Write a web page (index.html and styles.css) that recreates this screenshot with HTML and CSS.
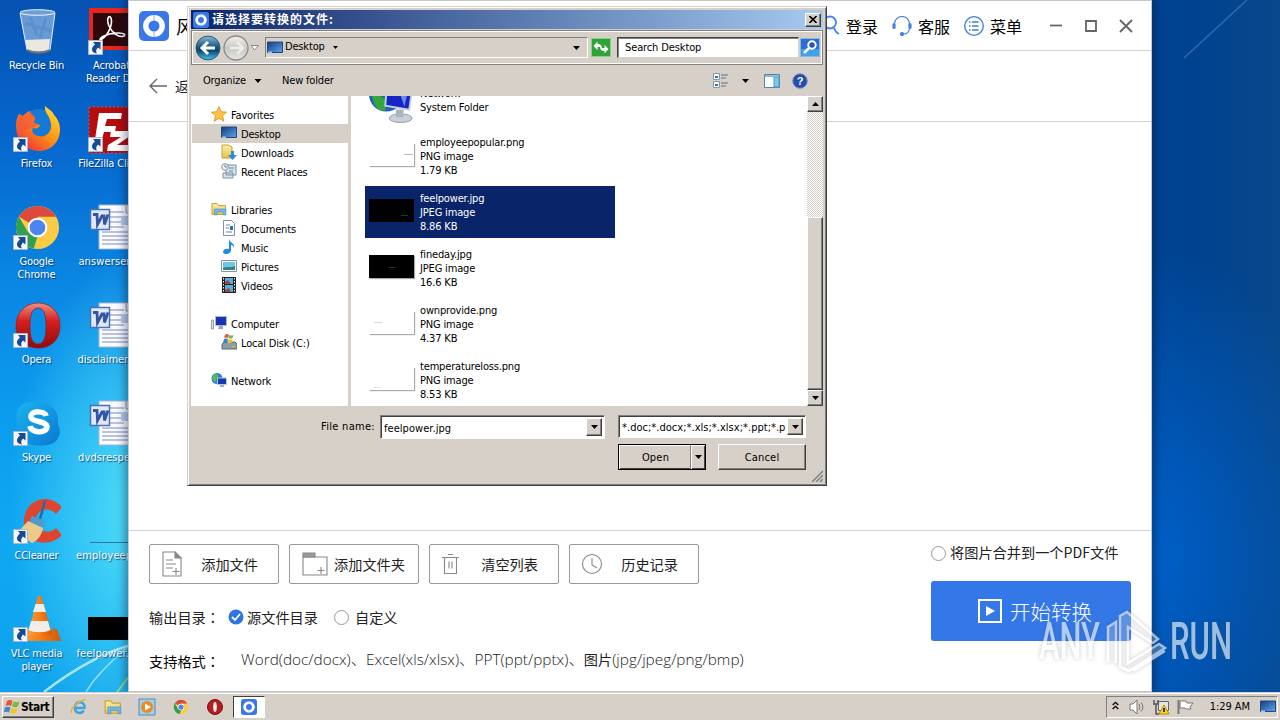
FILE: index.html
```html
<!DOCTYPE html>
<html lang="zh-CN">
<head>
<meta charset="utf-8">
<title>Desktop</title>
<link rel="stylesheet" href="styles.css">
</head>
<body>
<svg class="defs" width="0" height="0">
  <defs>
    <linearGradient id="gRed" x1="0" y1="0" x2="0" y2="1"><stop offset="0" stop-color="#ef8f84"/><stop offset=".4" stop-color="#d51f1f"/><stop offset="1" stop-color="#8f0a0c"/></linearGradient>
    <linearGradient id="gScreen" x1="0" y1="0" x2="1" y2="1"><stop offset="0" stop-color="#14397e"/><stop offset="1" stop-color="#5aa7ee"/></linearGradient>
    <linearGradient id="gFox" x1="1" y1="0" x2="0.2" y2="1"><stop offset="0" stop-color="#ffe83a"/><stop offset=".5" stop-color="#ff9a12"/><stop offset="1" stop-color="#ee2c3c"/></linearGradient>
    <linearGradient id="gSkype" x1="0" y1="0" x2="1" y2="1"><stop offset="0" stop-color="#19b4ee"/><stop offset="1" stop-color="#0a78d2"/></linearGradient>
    <linearGradient id="gBack" x1="0" y1="0" x2="0" y2="1"><stop offset="0" stop-color="#8fb9cf"/><stop offset=".45" stop-color="#175984"/><stop offset=".6" stop-color="#0b4470"/><stop offset="1" stop-color="#46c3ea"/></linearGradient>
    <linearGradient id="gFwd" x1="0" y1="0" x2="0" y2="1"><stop offset="0" stop-color="#f4f3f1"/><stop offset=".5" stop-color="#c9c7c3"/><stop offset="1" stop-color="#e8e6e3"/></linearGradient>
    <linearGradient id="gFolder" x1="0" y1="0" x2="0" y2="1"><stop offset="0" stop-color="#fdf0a8"/><stop offset="1" stop-color="#e9bf4e"/></linearGradient>
    <linearGradient id="gCone" x1="0" y1="0" x2="1" y2="0"><stop offset="0" stop-color="#f9a341"/><stop offset=".5" stop-color="#f67d16"/><stop offset="1" stop-color="#cf5a08"/></linearGradient>
    <symbol id="shortcut" viewBox="0 0 15 15"><path d="M.5.500h14v14H.5z" fill="#f4f7fb" stroke="#a9b6c6"/><path d="M5 2h7.500v7.500L10 7.500C8 9.500 7.700 11 8.800 13.500 3 12.500 2.500 8 7 4.500z" fill="#174a94"/></symbol>
    <symbol id="brand" viewBox="0 0 30 30"><rect width="30" height="30" rx="5" fill="#3b78e7"/><circle cx="15" cy="15" r="8.200" fill="none" stroke="#fff" stroke-width="5.400"/><path d="M15 3.500v6M15 20.500v6" stroke="#3b78e7" stroke-width=".6"/></symbol>
    <symbol id="monitor" viewBox="0 0 16 14"><path d="M.5 1h15v10.500H.5z" fill="url(#gScreen)" stroke="#24477f"/><path d="M1 10.500h4v2H1z" fill="#9fc4ea"/></symbol>
    <symbol id="word" viewBox="0 0 48 48"><path d="M11 1h37v44H11z" fill="#fdfdff" stroke="#a9b4cf"/><path d="M22 8h14M22 13h14M22 18h14M22 23h14M14 28h32M14 32h32M14 36h32M14 40h32" stroke="#7987cc" stroke-width="1.100"/><path d="M38 1v8h8" fill="#e3e8f2" stroke="#97a3bb"/><path d="M33 12h12v9H33z" fill="#b8cdea"/><path d="M2.500 5.500h19v20h-19z" fill="#dfe9f7" stroke="#4a70b6" stroke-width="1.500"/><path d="M5 10.500h4l.5 10L14 12h2l.5 8.500L20 10.500" fill="none" stroke="#3455a4" stroke-width="2.800"/></symbol>
    <symbol id="chrome" viewBox="0 0 48 48"><circle cx="24" cy="24" r="22" fill="#fbcb43"/><path d="M24 24 5 12.900A22 22 0 0 1 43 13H24z" fill="#dc4a3d"/><path d="M5 12.900 14.500 29 24 33l-3.800 12.700A22 22 0 0 1 5 12.900z" fill="#2ea050"/><circle cx="24" cy="24" r="10" fill="#fff"/><circle cx="24" cy="24" r="8" fill="#4b86ee"/></symbol>
    <symbol id="opera" viewBox="0 0 48 48"><path fill-rule="evenodd" d="M24 1c13 0 22 9 22 23S37 46 24 46 2 37 2 24 11 1 24 1zm0 5c-6 0-8 7-8 18s2 18 8 18 8-7 8-18-2-18-8-18z" fill="url(#gRed)" stroke="#9d1719" stroke-width=".7"/></symbol>
    <symbol id="folder" viewBox="0 0 16 16"><path d="M1 2.500h5l1.500 2H14.500v9H1z" fill="url(#gFolder)" stroke="#c9a13a"/><path d="M3.500 8h11.500v6h-2.500v-3H6v3H3.500z" fill="#6fb9e8" stroke="#4b91c9" stroke-width=".6"/></symbol>
    <symbol id="globe" viewBox="0 0 16 16"><circle cx="6" cy="6.500" r="5.500" fill="#2a7fd0"/><path d="M2 3c3-2 5-1 5 1s-3 3-2 5-3 0-4-2z" fill="#4fbd5a"/><path d="M6.500 6h9v6.500h-9z" fill="#1737b5" stroke="#b9c8da"/><path d="M9 13h4v2H9z" fill="#9db0c4"/></symbol>
    <symbol id="tri" viewBox="0 0 7 4"><path d="M0 0h7L3.500 4z" fill="#000"/></symbol>
  </defs>
</svg>

<main class="desktop">
  <svg class="streaks" viewBox="0 0 1280 692">
    <path d="M44 692C75 668 105 652 134 644" stroke="#d8f7ff" stroke-width="2.500" opacity=".75" fill="none"/>
    <path d="M86 692C98 672 114 660 134 640" stroke="#bdeffc" stroke-width="1.500" opacity=".7" fill="none"/>
    <path d="M117 692l14-18" stroke="#a5e86b" stroke-width="2" opacity=".8"/>
    <path d="M1184 58 1247 0" stroke="#4e8bc4" stroke-width="1.500" opacity=".55"/>
  </svg>

  <section class="icons">
    <div class="shortcut-tile"><svg viewBox="0 0 48 48"><path d="M7 4h35l-5 38c-4 4-18 4-23 0z" fill="#b9d6ef" opacity=".55"/><path d="M12 32l25-1-1 10c-4 3-17 3-22 0z" fill="#ece8e0"/><path d="M17 9l7 18M33 10l-6 20M12 15l26 8" stroke="#4f85c8" stroke-width="3" opacity=".5"/><ellipse cx="24.500" cy="4.500" rx="17.500" ry="2.800" fill="#6f9fd3" stroke="#eef5fc"/><path d="M14 42c5 3.500 18 3.500 23 0" stroke="#766f68" stroke-width="2" fill="none"/><path d="M7 5l7 37M42 5l-5 37" stroke="#e1eefa"/></svg><span>Recycle Bin</span></div>
    <div class="shortcut-tile"><svg viewBox="0 0 48 48"><path d="M1 0h47v42H1z" fill="#e7261d"/><path d="M5 5h43v33H5z" fill="#2d0709"/><path d="M14 31c6-4 11-14 9-21-2-4-5 1-2 8 3 7 10 12 15 10 4-3-10-5-20 0-6 3-4 5-2 3z" fill="none" stroke="#fff" stroke-width="1.600"/><use href="#shortcut" x="0" y="32" width="15" height="15"/></svg><span>Acrobat<br>Reader DC</span></div>

    <div class="shortcut-tile"><svg viewBox="0 0 48 48"><circle cx="26" cy="19" r="16" fill="#1679d4"/><path d="M32 0c-1 7 5 9 6 18 1 9-6 14-13 12-5-1-7-5-5-8 3 1 6 0 7-3l-6-2 1-6c-4-1-5-3-5-6-3 1-5 3-7 5L6 8C2 14 3 23 4 28c3 11 12 17 22 17 12 0 21-9 21-22 0-6-3-11-6-14-1-4-5-5-9-9z" fill="url(#gFox)"/><path d="M6 8c-3 9-2 16 0 22 3-5 7-7 14-8l7-3-6-2 1-6-5-6-7 5z" fill="#f1583a" opacity=".75"/><use href="#shortcut" x="0" y="31" width="15" height="15"/></svg><span>Firefox</span></div>
    <div class="shortcut-tile"><svg viewBox="0 0 48 48"><path d="M1 1h47v46H1z" fill="#b60c0d" stroke="#d54848" stroke-dasharray="2 2"/><path d="M11 7h23l-1 6H19l-2 7h11l-1 6H16l-4 14H6zM23 25h20l-1 5-13 9h13l-1 6H19l1-6 13-8H22z" fill="#fff"/><use href="#shortcut" x="0" y="31" width="15" height="15"/></svg><span>FileZilla Client</span></div>

    <div class="shortcut-tile"><svg viewBox="0 0 48 48"><use href="#chrome" x="1" y="0" width="47" height="47"/><use href="#shortcut" x="0" y="31" width="15" height="15"/></svg><span>Google<br>Chrome</span></div>
    <div class="shortcut-tile"><svg><use href="#word" width="48" height="48"/></svg><span class="wide">answersen...</span></div>

    <div class="shortcut-tile"><svg viewBox="0 0 48 48"><use href="#opera" x="1" width="48" height="48"/><use href="#shortcut" x="0" y="31" width="15" height="15"/></svg><span>Opera</span></div>
    <div class="shortcut-tile"><svg><use href="#word" width="48" height="48"/></svg><span class="wide tight">disclaimern...</span></div>

    <div class="shortcut-tile"><svg viewBox="0 0 48 48"><path d="M16 2c11 0 16-1 24 6 6 6 5 12 5 17 5 9-1 19-11 20-15 2-25-1-28-14C1 16 3 4 16 2z" fill="url(#gSkype)"/><path d="M33 16c-1-5-14-6-15 0-1 7 16 4 16 11-1 7-16 6-17-1" stroke="#fff" stroke-width="5.500" fill="none"/><use href="#shortcut" x="0" y="31" width="15" height="15"/></svg><span>Skype</span></div>
    <div class="shortcut-tile"><svg><use href="#word" width="48" height="48"/></svg><span class="wide far">dvdsrespe...</span></div>

    <div class="shortcut-tile"><svg viewBox="0 0 48 48"><path d="M49 9C35-7 10 2 11 25c1 22 26 25 38 12l-6-7c-7 7-20 4-20-8 0-11 13-14 20-6z" fill="#dc4630"/><path d="M32 3 27 21" stroke="#2868a5" stroke-width="2.500"/><path d="M19 18l13 5-2 8-15-5z" fill="#4e9bcb"/><path d="M15 23l15 7c-1 7-6 13-11 15L4 35z" fill="#edca8a"/><use href="#shortcut" x="0" y="31" width="15" height="15"/></svg><span>CCleaner</span></div>
    <div class="shortcut-tile"><svg viewBox="0 0 48 48"><path d="M2 44.500h46" stroke="#267da4"/></svg><span class="wide far">employeep...</span></div>

    <div class="shortcut-tile"><svg viewBox="0 0 48 48"><path d="M11 33h33l4 12H7z" fill="url(#gCone)"/><path d="M25 0h3l11 38c-4 3-20 3-24 0z" fill="url(#gCone)"/><path d="M22.500 8h8l2.500 8H20zM18 25h17l2.500 9c-6 3-16 3-22 0z" fill="#f1eeea"/><use href="#shortcut" x="0" y="31" width="15" height="15"/></svg><span>VLC media<br>player</span></div>
    <div class="shortcut-tile"><svg viewBox="0 0 48 48"><path d="M0 21h48v23H0z"/></svg><span class="wide">feelpower.jpg</span></div>
  </section>

  <section class="app">
    <header class="app-top">
      <svg class="logo"><use href="#brand" width="30" height="30"/></svg>
      <span class="app-name">风云</span>
      <nav class="app-links">
        <span><svg width="20" height="22" viewBox="0 0 20 22" fill="none" stroke="#4a86e8" stroke-width="1.800"><circle cx="10" cy="7.500" r="6"/><path d="M1 20c0-5 4-7 7-7M14 13c1 3 3 5 5 6"/></svg>登录</span>
        <span><svg width="20" height="20" viewBox="0 0 20 20" fill="none" stroke="#4a7fe8" stroke-width="1.200"><path d="M2.500 9V8a7.500 7.500 0 0 1 15 0v4c0 4-3 6-6 6"/><path d="M2 8.500v3M18 8.500v3" stroke-width="3.200" stroke-linecap="round"/><circle cx="10" cy="18" r="1.500" fill="#3f78e0"/></svg>客服</span>
        <span><svg width="20" height="20" viewBox="0 0 20 20" fill="none" stroke="#3f7be0" stroke-width="1.300"><circle cx="10" cy="10" r="9.300"/><path d="M8 6h6.500M8 10h6.500M8 14h6.500M5 6h1.500M5 10h1.500M5 14h1.500"/></svg>菜单</span>
      </nav>
      <div class="app-ctl">
        <svg viewBox="0 0 14 14"><path d="M1 6.500h12"/></svg>
        <svg viewBox="0 0 14 14"><path d="M2 2h10v10H2z"/></svg>
        <svg viewBox="0 0 14 14"><path d="m1 1 12 12M13 1 1 13"/></svg>
      </div>
    </header>
    <div class="app-back"><svg width="18" height="16" viewBox="0 0 18 16"><path d="M8 1 1 8l7 7M1 8h17" fill="none" stroke="#666" stroke-width="1.400"/></svg>返回</div>
    <div class="app-canvas"></div>
    <footer class="app-foot">
      <div class="foot-left">
        <div class="tools">
          <button><svg width="22" height="26" viewBox="0 0 22 26"><path d="M2 1h12l6 6v18H2zM5 9h7M5 13h10M5 17h7M15 17v7M11.500 20.500h7"/><path d="M14 1v6h6z" fill="#888"/></svg><b>添加文件</b></button>
          <button><svg width="28" height="24" viewBox="0 0 28 24"><path d="M2 5h24v18H2zM20 15v7M16.500 18.500h7"/><path d="M2 1h12v4H2z" fill="#999"/></svg><b>添加文件夹</b></button>
          <button><svg width="22" height="22" viewBox="0 0 22 22"><path d="M4.500 4.500h12v16h-12zM2 4.500h17M8 1.500h5M9 8.500v7M12 8.500v7"/></svg><b>清空列表</b></button>
          <button><svg width="22" height="22" viewBox="0 0 22 22"><circle cx="11" cy="11" r="9.500"/><path d="M11 5v7l5 3"/></svg><b>历史记录</b></button>
        </div>
        <div class="opts"><span class="opt-label">输出目录<i class="colon" lang="zh-TW">：</i></span><svg class="tick" width="16" height="16"><circle cx="8" cy="8" r="7.500" fill="#2f74e4"/><path d="m4 8 3 3 5-6" stroke="#fff" stroke-width="1.800" fill="none"/></svg><span class="opt-a">源文件目录</span><i class="radio"></i><span>自定义</span></div>
        <div class="formats"><span class="fmt-label">支持格式<i class="colon" lang="zh-TW">：</i></span><span class="fmt">Word(doc/docx)、Excel(xls/xlsx)、PPT(ppt/pptx)、<span class="cn">图片</span>(jpg/jpeg/png/bmp)</span></div>
      </div>
      <div class="foot-right">
        <div class="merge"><i class="radio"></i><span>将图片合并到一个PDF文件</span></div>
        <div class="start-btn"><svg width="24" height="24" viewBox="0 0 24 24"><path d="M1 1h22v22H1z" fill="none" stroke="#fff" stroke-width="2"/><path d="M8 7v10l9-5z" fill="#fff"/></svg><span>开始转换</span></div>
      </div>
    </footer>
  </section>

  <section class="dialog">
    <div class="dlg-title"><svg width="16" height="16"><use href="#brand" width="16" height="16"/></svg><span>请选择要转换的文件:</span><div class="box close"><svg width="8" height="7" viewBox="0 0 8 7"><path d="m.5 0 7 7M7.500 0l-7 7" stroke="#000" stroke-width="1.600"/></svg></div></div>
    <div class="dlg-nav">
      <svg class="arrows" width="70" height="28" viewBox="0 0 70 28"><circle cx="14" cy="14" r="12" fill="url(#gBack)" stroke="#2f5c77"/><path d="m14 8-6 6 6 6M8.500 14H21" stroke="#fff" stroke-width="3" fill="none"/><circle cx="42" cy="14" r="12" fill="url(#gFwd)" stroke="#8d8b87" stroke-width="1.300"/><path d="m43 8 6 6-6 6M48 14H36" stroke="#efedea" stroke-width="2.500" fill="none"/><path d="M57 11.500h7.500L60.700 16z" fill="#fff" stroke="#888"/></svg>
      <div class="address"><svg width="16" height="14"><use href="#monitor" width="16" height="14"/></svg><span>Desktop</span><svg class="a1" width="5" height="3"><use href="#tri" width="5" height="3"/></svg><svg class="a2" width="7" height="4"><use href="#tri" width="7" height="4"/></svg></div>
      <svg class="go" width="20" height="19" viewBox="0 0 20 19"><path d="M.5.500h19v18H.5z" fill="#2fa338" stroke="#88cf8c"/><path d="m2.500 8 4-4.500V6c3 0 4.500 1 4.500 5-1-2-2-2-4.500-2v3zM17.500 11l-4 4.500V13C10.500 13 9 12 9 8c1 2 2 2 4.500 2V7z" fill="#fff"/></svg>
      <div class="search">Search Desktop</div>
      <svg class="mag" width="20" height="19" viewBox="0 0 20 19"><path d="M.5.500h19v18H.5z" fill="#2c6fd2" stroke="#8ab7ea"/><path d="M1 11h18v7H1z" fill="#4cb7ec" opacity=".7"/><circle cx="12" cy="7" r="3.700" fill="#2553b5" stroke="#fff" stroke-width="2"/><path d="m9 10-5 5" stroke="#fff" stroke-width="2.500"/></svg>
    </div>
    <div class="dlg-bar"><span class="org">Organize</span><svg width="8" height="4"><use href="#tri" width="8" height="4"/></svg><span class="newf">New folder</span>
      <svg class="view" width="16" height="15" viewBox="0 0 16 15"><path d="M.5.500h6v6h-6zM.5 8.500h6v6h-6z" fill="#fff" stroke="#8796a6"/><path d="M2 4h3M2 12h3" stroke="#2472b5" stroke-width="2"/><path d="M8 2h7M8 5h5M8 10h7M8 13h5" stroke="#5c7287"/></svg>
      <svg class="view-a" width="7" height="4"><use href="#tri" width="7" height="4"/></svg>
      <svg class="pane" width="16" height="14" viewBox="0 0 16 14"><path d="M.5.500h15v13H.5z" fill="#fff" stroke="#4f84b4"/><path d="M10 3h5v10h-5z" fill="#79cbe9" stroke="#4f97c2"/><path d="M1 2h14" stroke="#91b8d7" stroke-width="2"/></svg>
      <svg class="help" width="16" height="16" viewBox="0 0 16 16"><circle cx="8" cy="8" r="7.300" fill="#244cab" stroke="#7f95c6"/><text x="8" y="12.200" text-anchor="middle">?</text></svg>
    </div>
    <div class="dlg-body">
      <aside class="tree">
        <div class="n"><svg viewBox="0 0 16 16"><path d="m8 .7 2.200 5 5.300.5-4 3.600 1.300 5.400L8 12.300l-4.800 2.900 1.300-5.400-4-3.600 5.300-.5z" fill="#ffc53c" stroke="#d8892b" stroke-width=".8"/></svg><span>Favorites</span></div>
        <div class="n c sel"><svg viewBox="0 0 16 16"><use href="#monitor" y="1" width="16" height="14"/></svg><span>Desktop</span></div>
        <div class="n c"><svg viewBox="0 0 16 16"><path d="M1 1h6l4 2v11H1z" fill="url(#gFolder)" stroke="#c99f37"/><path d="M10 7h3v4h3l-4.500 5L7 11h3z" fill="#268ddf"/></svg><span>Downloads</span></div>
        <div class="n c"><svg viewBox="0 0 16 16"><path d="M5 2h10v10H5zM2 10h10v5H2z" fill="#d8e5ee" stroke="#7c90a0"/><circle cx="4" cy="4" r="3.300" fill="#eee" stroke="#8b98a3"/><path d="M4 2v2h2M8 5h5M8 8h4" stroke="#5d88aa" fill="none"/></svg><span>Recent Places</span></div>
        <div class="gap"></div>
        <div class="n"><svg viewBox="0 0 16 16"><use href="#folder" width="16" height="16"/></svg><span>Libraries</span></div>
        <div class="n c"><svg viewBox="0 0 16 16"><path d="M2.500.5h8l3 3v12h-11z" fill="#fff" stroke="#8593a1"/><path d="M5 5h4M5 8h3M5 12h6" stroke="#6185ae"/><path d="M9 6h3v4H9z" fill="#2276b7"/></svg><span>Documents</span></div>
        <div class="n c"><svg viewBox="0 0 16 16"><path d="M8 0c1 4 6 4 5 9-1-3-2-3-3-3v5c0 5-8 5-8 2s4-4 6-3V0z" fill="#218bdd"/></svg><span>Music</span></div>
        <div class="n c"><svg viewBox="0 0 16 16"><path d="M.5 2.500h15v11H.5z" fill="#fff" stroke="#8395a5"/><path d="M2 4h12v8H2z" fill="#70c5eb"/><path d="M2 10c3-2 8 0 12-2v4H2z" fill="#37847e"/></svg><span>Pictures</span></div>
        <div class="n c"><svg viewBox="0 0 16 16"><path d="M1 0h14v16H1z" fill="#222"/><path d="M4 1h8v6H4zM4 8h8v7H4z" fill="#57aee0"/><path d="m4 5 3-2 3 4H4zM4 13l4-2 2 4H4z" fill="#a4473e"/><path d="M2.500 1v15M13.500 1v15" stroke="#eee" stroke-dasharray="1.500 1.500"/></svg><span>Videos</span></div>
        <div class="gap"></div>
        <div class="n"><svg viewBox="0 0 16 16"><path d="M4.500 1.500h11v9h-11z" fill="#1b31b8" stroke="#aab9c7"/><path d="M8 11h4v3H7z" fill="#91a8bf"/><path d="M.5 5h2v9h-2z" fill="#dfe5e5" stroke="#93a098"/></svg><span>Computer</span></div>
        <div class="n c"><svg viewBox="0 0 16 16"><path d="M1 10l3-2h10l2 2v5H1z" fill="#8e9da4" stroke="#5b666d"/><path d="M4 1q2-2 4 0L7 4q-2-1-4 0z" fill="#e75b34"/><path d="M8.500 1q2 1 4 0l-1 3q-2 1-4 0z" fill="#75b83f"/><path d="M3 5q2-1 4 0L6 9H2z" fill="#2d83cf"/><path d="M7.500 5q2 1 4 0l-1 4H6.500z" fill="#f2bf27"/><path d="M11 12.500h3" stroke="#6df03b"/></svg><span>Local Disk (C:)</span></div>
        <div class="gap"></div>
        <div class="n"><svg viewBox="0 0 16 16"><use href="#globe" width="16" height="16"/></svg><span>Network</span></div>
      </aside>
      <div class="files">
        <div class="f top"><svg class="net" viewBox="0 0 48 48"><circle cx="18" cy="18" r="18" fill="#1f62b4"/><path d="M3 18c6-2 10 3 16 6l-2 11C9 37 4 28 3 18z" fill="#35a63f"/><path d="m19 3 28-3-5 34-25-4z" fill="#1824c4" stroke="#c6d0df" stroke-width="2"/><path d="m27 2 10 29 6-28z" fill="#8cb7f3" opacity=".7"/><ellipse cx="33" cy="43" rx="12" ry="4.500" fill="#c9d0d8" stroke="#929da9"/><path d="M28 34h8v8h-8z" fill="#aab4c0"/></svg><p>Network<br>System Folder</p></div>
        <div class="f"><i class="thumb"><em class="m1"></em></i><p>employeepopular.png<br>PNG image<br>1.79 KB</p></div>
        <div class="f on"><i class="thumb dark"><em class="m2"></em></i><p>feelpower.jpg<br>JPEG image<br>8.86 KB</p></div>
        <div class="f"><i class="thumb dark"><em class="m3"></em></i><p>fineday.jpg<br>JPEG image<br>16.6 KB</p></div>
        <div class="f"><i class="thumb"><em class="m4"></em></i><p>ownprovide.png<br>PNG image<br>4.37 KB</p></div>
        <div class="f"><i class="thumb"><em class="m5"></em></i><p>temperatureloss.png<br>PNG image<br>8.53 KB</p></div>
      </div>
      <div class="scroll"><div class="box"><svg class="up" width="7" height="4"><use href="#tri" width="7" height="4"/></svg></div><div class="track"></div><div class="box knob"></div><div class="box"><svg width="7" height="4"><use href="#tri" width="7" height="4"/></svg></div></div>
    </div>
    <div class="dlg-foot">
      <div class="row"><label>File name:</label><div class="combo name"><span>feelpower.jpg</span><div class="box"><svg width="7" height="4"><use href="#tri" width="7" height="4"/></svg></div></div><div class="combo type"><span>*.doc;*.docx;*.xls;*.xlsx;*.ppt;*.p</span><div class="box"><svg width="7" height="4"><use href="#tri" width="7" height="4"/></svg></div></div></div>
      <div class="row acts"><div class="open"><div class="open-t">Open</div><div class="open-a"><svg width="7" height="4"><use href="#tri" width="7" height="4"/></svg></div></div><div class="box cancel">Cancel</div></div>
      <svg class="grip" width="12" height="12" viewBox="0 0 12 12"><path d="M1 12 12 1M5 12l7-7M9 12l3-3" stroke="#808080" stroke-width="1.500"/></svg>
    </div>
  </section>
</main>

<footer class="taskbar">
  <div class="start"><svg width="17" height="16" viewBox="0 0 17 16"><path d="M3 2q3-2 5.500 0L7 7Q4.500 5.500 1.500 7z" fill="#e8572c"/><path d="M9.500 2.500q3 1.500 6 0L14 7.500q-3 1.500-6 0z" fill="#7dba3c"/><path d="M1 8.500q3-1.500 5.500 0L5 13.500q-3-1.500-5.500 0z" fill="#3b86d8"/><path d="M7.500 9q3 1.500 6 0l-1.500 5q-3 1.500-6 0z" fill="#f5c12d"/></svg>Start</div>
  <div class="pins">
    <svg viewBox="0 0 18 18"><path d="M15.500 10H5c0 6 7 6 8.500 2.500M5 9c0-6.500 9.500-6.500 9.500 0" fill="none" stroke="#3da4e4" stroke-width="2.600"/><path d="M2 15C-1 12 9 1 16 2" fill="none" stroke="#e8b33a" stroke-width="1.500"/></svg>
    <svg viewBox="0 0 16 16"><use href="#folder" width="16" height="16"/></svg>
    <svg viewBox="0 0 18 18"><path d="M1 1h16v16H1z" fill="#9fd0ee" stroke="#4b8fc0"/><circle cx="9" cy="9" r="6" fill="#f08a1d"/><path d="M7 5.500v7L13 9z" fill="#fff"/></svg>
    <svg viewBox="0 0 48 48"><use href="#chrome" x="3" y="3" width="42" height="42"/></svg>
    <svg viewBox="0 0 18 18"><circle cx="9" cy="9" r="7.500" fill="#b91c20" stroke="#7a0c0f"/><ellipse cx="9" cy="9" rx="1.800" ry="5" fill="#eee"/></svg>
  </div>
  <div class="running"><svg width="16" height="16"><use href="#brand" width="16" height="16"/></svg></div>
  <div class="tray">
    <svg class="t1" width="7" height="9" viewBox="0 0 7 9"><path d="m.7 4 2.800-2.700L6.300 4M.7 8l2.800-2.700L6.300 8" stroke="#000" stroke-width="1.300" fill="none"/></svg>
    <svg class="t2" width="17" height="16" viewBox="0 0 17 16"><path d="M1 5h3l4-4v14l-4-4H1z" fill="#fff" stroke="#777"/><path d="M10 5q2 3 0 6M12 3.500q4 4.500 0 9" stroke="#777" fill="none"/></svg>
    <svg class="t3" width="17" height="16" viewBox="0 0 17 16"><path d="M5.500 2.500h10v9h-10z" fill="#e4e4e4" stroke="#666"/><path d="M1 1v4h4V1M3 5v10h3" stroke="#555" fill="none" stroke-width="1.500"/><path d="m11 6 5 9H6z" fill="#ffd51d" stroke="#b58d00"/><path d="M11 9v4" stroke="#000" stroke-width="1.500"/></svg>
    <svg class="t4" width="17" height="16" viewBox="0 0 17 16"><path d="M1.500 1v14" stroke="#777" stroke-width="2"/><path d="M3 2h6l1 2h6l-3 4 1 2H9L8 9H3z" fill="#fff" stroke="#777"/></svg>
    <span>1:29 AM</span>
    <svg width="16" height="14"><use href="#monitor" width="16" height="14"/></svg>
  </div>
</footer>

<svg class="watermark" width="200" height="70" viewBox="0 0 200 70">
  <text x="4" y="50" textLength="61" lengthAdjust="spacingAndGlyphs">ANY</text>
  <path d="M73 54V18l8-5v41M85 13V58l9 4 36-23-6-4-31 19V18l25 16 5-4L92 3l-7 4zM98 62l32-20"/>
  <text x="135" y="50" textLength="62" lengthAdjust="spacingAndGlyphs">RUN</text>
</svg>
</body>
</html>
```
FILE: styles.css
```css
* { box-sizing: border-box; }
body { margin: 0; width: 1280px; height: 720px; overflow: hidden; position: relative; display: flex; flex-direction: column; color: #000; font: 11px/14px "DejaVu Sans Condensed", "DejaVu Sans", "Noto Sans CJK SC", sans-serif; font-stretch: condensed; letter-spacing: -.17px; }
p { margin: 0; }
i { font-style: normal; }
svg { display: block; flex: none; }
.defs { position: absolute; }

.desktop { position: relative; height: 692px; overflow: hidden; background: radial-gradient(ellipse 200px 320px at 1140px 560px, #0062cc, rgba(0,90,200,0)), linear-gradient(90deg, #0058ba 0, #0464cc 12%, #0050a8 70%, #00428f 93%, #08488c 100%); }
.desktop::before { content: ""; position: absolute; left: 0; top: 0; width: 130px; height: 692px; background: radial-gradient(ellipse 130px 260px at 140px 510px, rgba(88,228,250,.95), rgba(60,205,245,0)), linear-gradient(180deg, #0552b2, #0664cb 18%, #0a85e2 40%, #0c9cee 60%, #10a8f2 78%, #0fa2ec); }
.streaks { position: absolute; left: 0; top: 0; width: 1280px; height: 692px; }

.icons { position: absolute; left: -1px; top: 8px; display: grid; grid-template-columns: 75px 75px; grid-auto-rows: 98px; }
.shortcut-tile { display: flex; flex-direction: column; align-items: center; gap: 3px; color: #fff; text-align: center; line-height: 13px; white-space: nowrap; text-shadow: 1px 1px 1px rgba(0,30,80,.7); }
.shortcut-tile svg { width: 48px; height: 48px; }
.shortcut-tile span { flex: none; }
.wide { letter-spacing: .12px; padding-right: 2px; }
.wide.tight { letter-spacing: -.05px; }
.wide.far { padding-right: 5px; }

.app { position: absolute; left: 128px; top: 0; width: 1024px; height: 692px; background: #fff; border: 1px solid #c4c8cc; box-shadow: 0 0 10px 2px rgba(0,20,50,.5); display: flex; flex-direction: column; font-family: "Noto Sans CJK SC", sans-serif; letter-spacing: 0; font-stretch: normal; }
.app-top { height: 50px; border-bottom: 1px solid #d2d2d2; display: flex; align-items: center; padding: 0 18px 0 10px; font-size: 16px; line-height: 20px; }
.logo { width: 30px; height: 30px; }
.app-name { margin-left: 7px; font-size: 18px; }
.app-links { margin-left: auto; display: flex; gap: 14px; margin-right: 1px; }
.app-links span { display: flex; align-items: center; gap: 6px; }
.app-ctl { display: flex; gap: 21px; margin-left: 26px; }
.app-ctl svg { width: 14px; height: 14px; fill: none; stroke: #666; stroke-width: 1.800; }
.app-back { height: 71px; border-bottom: 1px solid #d2d2d2; display: flex; align-items: center; gap: 8px; padding-left: 20px; font-size: 14px; color: #222; }
.app-canvas { flex: 1; }
.app-foot { height: 161px; border-top: 1px solid #d2d2d2; display: flex; justify-content: space-between; padding: 13px 20px 0; font-size: 14.200px; line-height: 20px; color: #222; }
.tools { display: flex; gap: 10px; }
.tools button { width: 130px; height: 40px; border: 1px solid #999; border-radius: 2px; background: #fff; padding: 0 13px 0 11px; display: flex; align-items: center; font: inherit; color: inherit; }
.tools svg { fill: none; stroke: #888; stroke-width: 1.100; }
.tools b { font-weight: 400; flex: 1; text-align: right; white-space: nowrap; }
.tools button:not(:nth-child(2)) { padding-right: 20px; }
.tools button:nth-child(3) { padding-left: 10px; }
.colon { font-family: "Noto Sans CJK TC", sans-serif; }
.opts { display: flex; align-items: center; height: 20px; margin-top: 23px; }
.opt-label { width: 79px; }
.opt-a { margin: 0 16px 0 3px; }
.radio { width: 15px; height: 15px; border: 1px solid #999; border-radius: 50%; }
.opts .radio { margin-right: 6px; }
.formats { display: flex; margin-top: 22px; color: #000; white-space: nowrap; }
.fmt-label { width: 92px; padding-top: 2px; }
.fmt { font: 300 15.300px/20px "Open Sans", "Noto Sans CJK SC", sans-serif; color: #222; letter-spacing: .02px; }
.fmt .cn { font-size: 14.200px; font-weight: 400; }
.foot-right { width: 200px; }
.merge { display: flex; align-items: center; gap: 4px; margin-top: -2px; font-size: 14.200px; white-space: nowrap; }
.merge .radio { position: relative; top: 1px; }
.start-btn { height: 60px; margin-top: 19px; background: #3478e8; border-radius: 3px; display: flex; align-items: center; justify-content: center; gap: 8px; padding-left: 8px; color: #fff; font-size: 20.500px; line-height: 26px; font-weight: 300; }

.dialog { position: absolute; left: 187px; top: 6px; width: 640px; height: 480px; background: #d6d0c8; border: 1px solid; border-color: #d6d0c8 #404040 #404040 #d6d0c8; box-shadow: inset 1px 1px #fff, inset -1px -1px #808080; padding: 3px; display: flex; flex-direction: column; }
.dlg-title { height: 19px; background: linear-gradient(90deg, #0a246a, #a6caf0); display: flex; align-items: center; gap: 3px; padding: 0 2px; color: #fff; font: bold 12px/18px "Noto Sans CJK SC", sans-serif; letter-spacing: 1px; }
.dlg-title span { position: relative; top: -1px; }
.dlg-title .close { margin-left: auto; width: 16px; height: 14px; }
.box { background: #d6d0c8; border: 1px solid; border-color: #fff #404040 #404040 #fff; box-shadow: inset -1px -1px #808080; display: flex; align-items: center; justify-content: center; flex: none; }
.dlg-nav { height: 35px; margin-top: 1px; border: 1px solid #808080; box-shadow: inset 1px 1px #fff, inset -1px -1px #fff; display: flex; align-items: center; padding: 0 1px 0 2px; }
.address { width: 323px; height: 21px; margin-left: 1px; border: 1px solid; border-color: #808080 #fff #fff #808080; display: flex; align-items: center; padding-left: 1px; }
.address span { margin: -1px 8px 0 2px; width: 40px; white-space: nowrap; }
.a2 { margin: 0 7px 0 auto; }
.go { margin-left: 3px; }
.search { width: 182px; height: 21px; margin: 0 0 0 6px; background: #fff; border: 1px solid; border-color: #404040 #d6d0c8 #d6d0c8 #404040; padding: 3px 0 0 7px; box-shadow: inset 1px 1px #808080; letter-spacing: -.12px; }
.mag { margin-left: 1px; }
.dlg-bar { height: 31px; display: flex; align-items: center; padding: 0 15px 0 12px; flex: none; }
.org { width: 51px; }
.newf { margin-left: 20px; }
.view { margin-left: auto; }
.view-a { margin: 0 15px 0 13px; }
.pane { margin-right: 12px; }
.help text { font: bold 11px "Liberation Sans", sans-serif; fill: #fff; }
.dlg-body { height: 310px; display: flex; background: #fff; flex: none; }
.tree { width: 160px; border-right: 3px solid #d6d0c8; padding-top: 9px; }
.n { height: 19px; display: flex; align-items: center; gap: 4px; padding-left: 20px; white-space: nowrap; }
.n span { padding-top: 2px; }
.n.c { padding-left: 30px; }
.n.sel { background: #d6d0c8; margin-left: 1px; padding-left: 29px; }
.n svg { width: 16px; height: 16px; margin-top: -1px; }
.gap { height: 19px; }
.files { flex: 1; overflow: hidden; padding-left: 14px; }
.f { width: 250px; height: 52px; margin-bottom: 4px; padding-left: 4px; display: flex; align-items: center; gap: 6px; white-space: nowrap; }
.f.top { margin-top: -22px; }
.f p { line-height: 14px; padding-top: 2px; }
.net { width: 46px; height: 48px; margin-right: -1px; }
.f.on { background: #0a246a; color: #fff; }
.thumb { width: 45px; height: 23px; background: #fff; box-shadow: 1px 1px 1px #aaa; position: relative; flex: none; margin-top: -4px; }
.thumb.dark { background: #000; }
.f.on .thumb { box-shadow: none; }
.thumb em { position: absolute; height: 1px; background: #bbb; }
.m1 { width: 9px; left: 35px; top: 11px; }
.thumb .m2 { width: 7px; left: 32px; top: 16px; opacity: .5; background: #3a7a3a; }
.m3 { width: 6px; left: 20px; top: 12px; opacity: .25; }
.m4 { width: 8px; left: 5px; top: 11px; opacity: .6; }
.m5 { width: 7px; left: 5px; top: 20px; opacity: .5; }
.scroll { width: 16px; display: flex; flex-direction: column; }
.scroll .box { height: 16px; }
.track { height: 105px; background: repeating-conic-gradient(#d6d0c8 0 25%, #fff 0 50%) 0 0 / 2px 2px; }
.scroll .knob { height: auto; flex: 1; }
.up { transform: rotate(180deg); }
.dlg-foot { flex: 1; position: relative; padding-top: 9px; }
.row { display: flex; }
.row label { width: 189px; text-align: right; padding: 5px 5px 0 0; letter-spacing: .3px; }
.combo { height: 24px; display: flex; background: #fff; border: 1px solid; border-color: #808080 #fff #fff #808080; box-shadow: inset 1px 1px #404040; padding: 2px; overflow: hidden; white-space: nowrap; }
.combo span { flex: 1; overflow: hidden; padding: 4px 0 0 1px; line-height: 14px; letter-spacing: .05px; }
.combo .box { width: 16px; }
.name { width: 225px; }
.type { width: 188px; margin-left: 13px; height: 23px; }
.combo.type span { padding-top: 3px; letter-spacing: .02px; }
.acts { margin: 5px 0 0 427px; gap: 12px; letter-spacing: .2px; }
.open { width: 88px; height: 26px; border: 1px solid #000; display: flex; box-shadow: inset 1px 1px #fff, inset -1px -1px #404040; }
.open-t { width: 72px; padding: 6px 0 0 2px; text-align: center; border-right: 1px solid #808080; }
.open-a { flex: 1; display: flex; align-items: center; justify-content: center; box-shadow: inset 1px 0 #fff; }
.cancel { width: 88px; height: 26px; padding-top: 1px; }
.grip { position: absolute; right: 0; bottom: 0; }

.taskbar { height: 28px; background: #d6d0c8; border-top: 1px solid #d6d0c8; box-shadow: inset 0 1px #fff; display: flex; align-items: center; padding: 1px 2px 0; }
.start { width: 52px; height: 22px; display: flex; align-items: center; gap: 0; padding-left: 1px; border: 1px solid; border-color: #fff #404040 #404040 #fff; box-shadow: inset -1px -1px #808080; font: bold 12px/14px "DejaVu Sans Condensed", "DejaVu Sans", sans-serif; font-stretch: condensed; letter-spacing: -.5px; }
.pins { display: flex; margin-left: 16px; gap: 16px; }
.pins svg { width: 18px; height: 18px; }
.running { width: 32px; height: 22px; margin-left: 9px; background: #fff; border: 1px solid; border-color: #404040 #fff #fff #404040; display: flex; align-items: center; justify-content: center; }
.tray { margin-left: auto; width: 172px; height: 22px; border: 1px solid; border-color: #808080 #fff #fff #808080; display: flex; align-items: center; padding: 0 1px 0 5px; }
.t1 { margin-top: -3px; }
.t2 { margin-left: 10px; }
.t3 { margin-left: 7px; }
.t4 { margin-left: 7px; }
.tray span { margin: 0 10px 0 auto; white-space: nowrap; letter-spacing: -.05px; }

.watermark { position: absolute; left: 1035px; top: 609px; overflow: visible; filter: drop-shadow(0 0 2px rgba(60,70,80,.5)); opacity: .62; fill: #fff; }
.watermark text { font: 500 51px Roboto, sans-serif; letter-spacing: 0; }
.watermark path { fill: rgba(255,255,255,.35); stroke: #fff; stroke-width: 2.500; }
```
